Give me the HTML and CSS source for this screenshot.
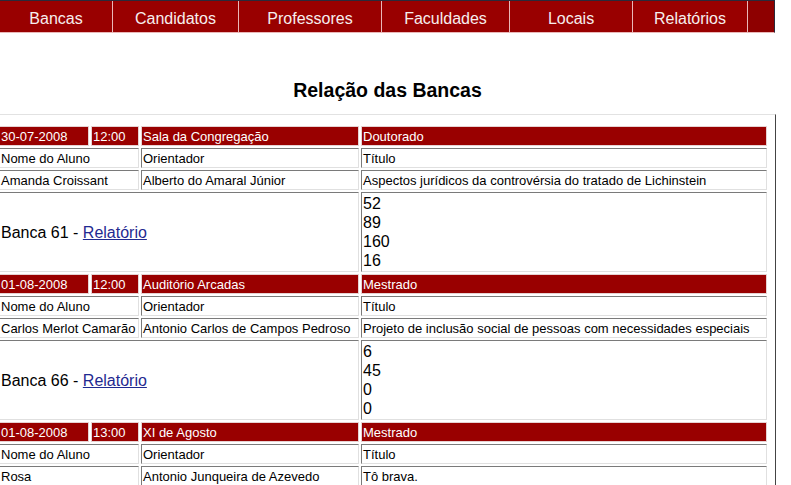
FILE: index.html
```html
<!DOCTYPE html>
<html lang="pt">
<head>
<meta charset="utf-8">
<title>Relação das Bancas</title>
<link rel="stylesheet" href="styles.css">
</head>
<body>
<nav class="nav">
  <a class="nav-item w1" href="#">Bancas</a>
  <a class="nav-item w2" href="#">Candidatos</a>
  <a class="nav-item w3" href="#">Professores</a>
  <a class="nav-item w4" href="#">Faculdades</a>
  <a class="nav-item w5" href="#">Locais</a>
  <a class="nav-item w6" href="#">Relatórios</a>
  <span class="nav-item w7"></span>
</nav>
<h1 class="title">Relação das Bancas</h1>
<div class="frame">
<table class="bancas">
  <colgroup>
    <col class="c-date"><col class="c-time"><col class="c-place"><col class="c-level">
  </colgroup>
  <tbody>
    <tr class="head"><td>30-07-2008</td><td>12:00</td><td>Sala da Congregação</td><td>Doutorado</td></tr>
    <tr><td colspan="2">Nome do Aluno</td><td>Orientador</td><td>Título</td></tr>
    <tr><td colspan="2">Amanda Croissant</td><td>Alberto do Amaral Júnior</td><td>Aspectos jurídicos da controvérsia do tratado de Lichinstein</td></tr>
    <tr class="banca"><td colspan="3" class="banca-name">Banca 61 - <a href="#">Relatório</a></td><td class="nums">52<br>89<br>160<br>16</td></tr>

    <tr class="head"><td>01-08-2008</td><td>12:00</td><td>Auditório Arcadas</td><td>Mestrado</td></tr>
    <tr><td colspan="2">Nome do Aluno</td><td>Orientador</td><td>Título</td></tr>
    <tr><td colspan="2">Carlos Merlot Camarão</td><td>Antonio Carlos de Campos Pedroso</td><td>Projeto de inclusão social de pessoas com necessidades especiais</td></tr>
    <tr class="banca"><td colspan="3" class="banca-name">Banca 66 - <a href="#">Relatório</a></td><td class="nums">6<br>45<br>0<br>0</td></tr>

    <tr class="head"><td>01-08-2008</td><td>13:00</td><td>XI de Agosto</td><td>Mestrado</td></tr>
    <tr><td colspan="2">Nome do Aluno</td><td>Orientador</td><td>Título</td></tr>
    <tr><td colspan="2">Rosa</td><td>Antonio Junqueira de Azevedo</td><td>Tô brava.</td></tr>
  </tbody>
</table>
</div>
</body>
</html>
```
FILE: styles.css
```css
html {
  overflow: hidden;
}
body {
  margin: 0;
  background: #ffffff;
  font-family: "Liberation Sans", Arial, sans-serif;
  color: #000000;
}

.nav {
  display: flex;
  width: 774px;
  border-top: 1px solid #2a2a3a;
  border-right: 1px solid #2a2a3a;
  border-bottom: 1px solid #eab8b8;
  background: #990000;
}
.nav-item {
  box-sizing: border-box;
  height: 31px;
  padding-top: 8px;
  line-height: 19px;
  font-size: 16px;
  color: #f6eeee;
  text-align: center;
  text-decoration: none;
  border-right: 1px solid #eab8b8;
}
.w1 { width: 113px; }
.w2 { width: 126px; }
.w3 { width: 143px; }
.w4 { width: 128px; }
.w5 { width: 123px; }
.w6 { width: 115px; }
.w7 { width: 26px; border-right: none; background: #8e0000; }

.title {
  width: 775px;
  margin: 46px 0 12px 0;
  font-size: 19.5px;
  line-height: 23px;
  font-weight: bold;
  text-align: center;
}

.frame {
  width: 772px;
  margin-left: -3px;
  padding: 9px 6px 0 0;
  border-top: 1px solid #e2e2e2;
  border-right: 1px solid #444444;
}

.bancas {
  table-layout: fixed;
  width: 772px;
  border-collapse: separate;
  border-spacing: 2px;
}
.c-date { width: 90px; }
.c-time { width: 48px; }
.c-place { width: 218px; }
.c-level { width: 406px; }

.bancas td {
  box-sizing: border-box;
  padding: 2px 1px 0 1px;
  font-size: 13px;
  line-height: 16px;
  white-space: nowrap;
  overflow: hidden;
  border: 1px solid;
  border-color: #7a7a7a #e0e0e0 #e0e0e0 #7a7a7a;
  vertical-align: middle;
}
.bancas .head td {
  background: #990000;
  color: #ffffff;
  border-color: #e6d2d2;
}
.bancas .banca td {
  font-size: 16px;
  line-height: 19px;
  padding: 1px;
}
.banca-name a {
  color: #1f2a90;
  text-decoration: underline;
}
```
